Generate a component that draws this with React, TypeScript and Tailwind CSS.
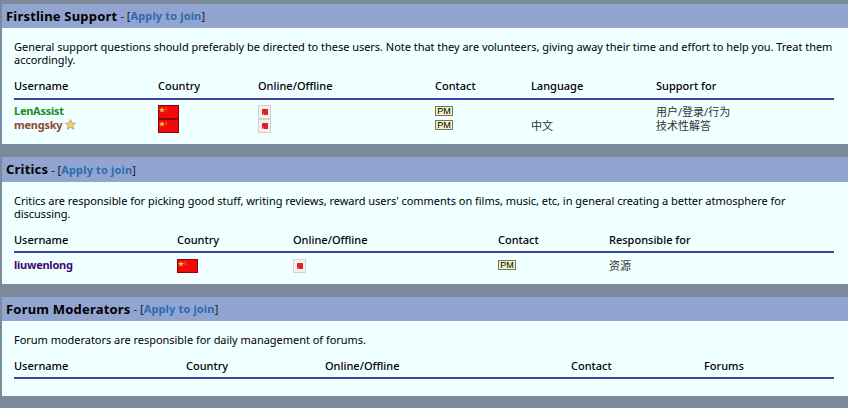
const Flag = () => (
  <svg width="21" height="14" viewBox="0 0 21 14" className="block">
    <rect x="0.5" y="0.5" width="20" height="13" fill="#f00a0a" stroke="#8a0505" />
    <polygon points="4,2 4.8,4 7,4.1 5.3,5.4 5.9,7.5 4,6.3 2.1,7.5 2.7,5.4 1,4.1 3.2,4" fill="#fbc23a" />
    <circle cx="8" cy="3" r="0.6" fill="#fbc23a" />
    <circle cx="8.5" cy="5" r="0.6" fill="#fbc23a" />
  </svg>
);

const Offline = () => (
  <svg width="13" height="14" viewBox="0 0 13 14" className="block">
    <rect x="0.5" y="0.5" width="12" height="13" fill="#f4f1ec" stroke="#d5d2cc" />
    <rect x="4" y="4" width="6" height="6" rx="0.5" fill="#e01f2c" />
    <polygon points="4,10 6,8 6,10" fill="#f08a8a" />
  </svg>
);

const Star = () => (
  <svg width="11" height="11" viewBox="0 0 11 11" className="ml-[3px] inline-block align-[-1px]">
    <polygon
      points="5.5,0.5 7,4 10.5,4.3 7.8,6.6 8.8,10.3 5.5,8.3 2.2,10.3 3.2,6.6 0.5,4.3 4,4"
      fill="#efd36a"
      stroke="#a89a70"
      strokeWidth="0.8"
    />
  </svg>
);

const PM = () => (
  <span className="mt-[2px] flex h-[10px] w-[18px] items-center justify-center self-start border border-[#77784f] bg-[#f3f1c9] font-['Liberation_Sans',sans-serif] text-[9px] leading-none text-black">
    PM
  </span>
);

type Row = { name: string; color: string; star?: boolean; cells: string[] };

const Section = ({
  title,
  text,
  heads,
  cols,
  rows,
  className,
  headClass,
  labelRowClass,
  rowsClass = "mt-[4px]",
}: {
  title: string;
  text: string;
  heads: string[];
  cols: string;
  rows: Row[];
  className: string;
  headClass: string;
  labelRowClass: string;
  rowsClass?: string;
}) => (
  <section className={`bg-[#f0ffff] ${className}`}>
    <h2 className={`flex items-center bg-[#92a5d0] pl-[4px] pt-[1px] text-[11px] text-[#101828] ${headClass}`}>
      <span className="text-[13px] font-bold tracking-[0.2px] text-black">{title}</span>
      <span className="ml-[3px]">- [</span>
      <span className="font-bold tracking-[0.15px] text-[#2a6cb0]">Apply to join</span>
      <span>]</span>
    </h2>
    <div className="pl-[12px] pr-[14px] pt-[12px] text-black">
      <p className="text-[11px] leading-[13px] tracking-[-0.03px]">{text}</p>
      <div className={`mt-[12px] grid items-center border-b-2 border-[#3f3f9f] ${labelRowClass} ${cols}`}>
        {heads.map((h) => (
          <span key={h} className="text-[11px] font-medium leading-[13px]">
            {h}
          </span>
        ))}
      </div>
      <div className={rowsClass}>
        {rows.map((r) => (
          <div key={r.name} className={`grid h-[14px] items-center ${cols}`}>
            <span className="pb-[1px] text-[11px] font-bold leading-[14px] tracking-[-0.25px]" style={{ color: r.color }}>
              {r.name}
              {r.star && <Star />}
            </span>
            <Flag />
            <Offline />
            <PM />
            {r.cells.map((c, i) => (
              <span key={i} className="text-[11px] leading-[14px] text-[#333]">
                {c}
              </span>
            ))}
          </div>
        ))}
      </div>
    </div>
  </section>
);

export default function App() {
  return (
    <div className="h-[408px] w-[848px] overflow-hidden bg-[#7b8b9b] pl-[2px] pt-[4px] font-['Noto_Sans','Noto_Sans_CJK_SC',sans-serif]">
      <Section
        className="h-[140px]"
        headClass="h-[24px]"
        labelRowClass="h-[22px] pb-[5px]"
        title="Firstline Support"
        text="General support questions should preferably be directed to these users. Note that they are volunteers, giving away their time and effort to help you. Treat them accordingly."
        heads={["Username", "Country", "Online/Offline", "Contact", "Language", "Support for"]}
        cols="grid-cols-[144px_100px_177px_96px_125px_178px]"
        rows={[
          { name: "LenAssist", color: "#1f8a1f", cells: ["", "用户/登录/行为"] },
          { name: "mengsky", color: "#8b4a32", star: true, cells: ["中文", "技术性解答"] },
        ]}
      />
      <Section
        className="mt-[13px] h-[127px]"
        headClass="h-[25px]"
        labelRowClass="h-[21px] pb-[4px]"
        rowsClass="mt-[5px]"
        title="Critics"
        text="Critics are responsible for picking good stuff, writing reviews, reward users' comments on films, music, etc, in general creating a better atmosphere for discussing."
        heads={["Username", "Country", "Online/Offline", "Contact", "Responsible for"]}
        cols="grid-cols-[163px_116px_205px_111px_225px]"
        rows={[{ name: "liuwenlong", color: "#3c0a6e", cells: ["资源"] }]}
      />
      <Section
        className="mt-[13px] h-[99px]"
        headClass="h-[24px]"
        labelRowClass="h-[21px] pb-[4px]"
        title="Forum Moderators"
        text="Forum moderators are responsible for daily management of forums."
        heads={["Username", "Country", "Online/Offline", "Contact", "Forums"]}
        cols="grid-cols-[172px_139px_246px_133px_130px]"
        rows={[]}
      />
    </div>
  );
}
